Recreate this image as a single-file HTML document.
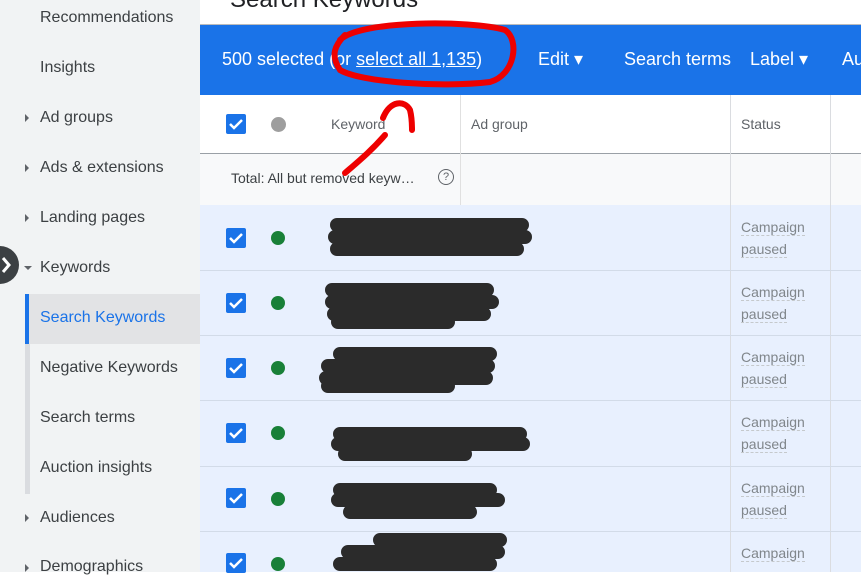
<!DOCTYPE html><html><head><style>
body{margin:0;width:861px;height:572px;overflow:hidden;font-family:"Liberation Sans",sans-serif;position:relative;background:#fff}
.sb{position:absolute;left:0;top:0;width:200px;height:572px;background:#f1f3f4}
.it{position:absolute;left:40px;font-size:16px;color:#3c4043}
.ar{position:absolute;left:25px;width:0;height:0;border-top:4px solid transparent;border-bottom:4px solid transparent;border-left:4px solid #5f6368}
.a{position:absolute}
.cb{position:absolute;left:226px;width:20px;height:20px;background:#1a73e8;border-radius:2px}
.dot{position:absolute;left:271px;width:14px;height:14px;border-radius:50%;background:#188038}
.st{position:absolute;left:741px;font-size:14px;color:#80868b;line-height:22px}
.st span{border-bottom:1px dashed #c5c9cc}
</style></head><body>
<div class="sb"></div>
<div class="it" style="top:9px">Recommendations</div>
<div class="it" style="top:59px">Insights</div>
<div class="ar" style="top:114px"></div><div class="it" style="top:109px">Ad groups</div>
<div class="ar" style="top:164px"></div><div class="it" style="top:159px">Ads &amp; extensions</div>
<div class="ar" style="top:214px"></div><div class="it" style="top:209px">Landing pages</div>
<div class="a" style="left:24px;top:266px;border-left:4px solid transparent;border-right:4px solid transparent;border-top:4px solid #5f6368"></div>
<div class="it" style="top:259px">Keywords</div>
<div class="a" style="left:25px;top:294px;width:5px;height:200px;background:#dadce0"></div>
<div class="a" style="left:25px;top:294px;width:175px;height:50px;background:#e2e3e5"></div>
<div class="a" style="left:25px;top:294px;width:4px;height:50px;background:#1a73e8"></div>
<div class="it" style="top:309px;color:#1a73e8">Search Keywords</div>
<div class="it" style="top:359px">Negative Keywords</div>
<div class="it" style="top:409px">Search terms</div>
<div class="it" style="top:459px">Auction insights</div>
<div class="ar" style="top:514px"></div><div class="it" style="top:509px">Audiences</div>
<div class="ar" style="top:564px"></div><div class="it" style="top:558px">Demographics</div>
<div class="a" style="left:-19px;top:246px;width:38px;height:38px;border-radius:50%;background:#3c4043"></div>
<div class="a" style="left:230px;top:-14px;font-size:24px;color:#202124">Search Keywords</div>
<div class="a" style="left:200px;top:24px;width:661px;height:1px;background:#bbb"></div>
<div class="a" style="left:200px;top:25px;width:661px;height:70px;background:#1a73e8;color:#fff;font-size:18px">
<div class="a" style="left:22px;top:24px;white-space:nowrap">500 selected (or <u>select all 1,135</u>)</div>
<div class="a" style="left:338px;top:24px;white-space:nowrap">Edit ▾</div>
<div class="a" style="left:424px;top:24px;white-space:nowrap">Search terms</div>
<div class="a" style="left:550px;top:24px;white-space:nowrap">Label ▾</div>
<div class="a" style="left:642px;top:24px">Au</div></div>
<div class="a" style="left:200px;top:153px;width:661px;height:52px;background:#f8f9fa"></div>
<div class="a" style="left:200px;top:153px;width:661px;height:1px;background:#9aa0a6"></div>
<div class="a" style="left:200px;top:205px;width:661px;height:367px;background:#e8f0fe"></div>
<div class="a" style="left:460px;top:95px;width:1px;height:110px;background:#e0e0e0"></div>
<div class="a" style="left:730px;top:95px;width:1px;height:477px;background:#dadce0"></div>
<div class="a" style="left:830px;top:95px;width:1px;height:477px;background:#dadce0"></div>
<div class="cb" style="top:114px"></div>
<div class="cb" style="top:228px"></div><div class="cb" style="top:293px"></div><div class="cb" style="top:358px"></div><div class="cb" style="top:423px"></div><div class="cb" style="top:488px"></div><div class="cb" style="top:553px"></div>
<div class="a" style="left:271px;top:117px;width:15px;height:15px;border-radius:50%;background:#9e9e9e"></div>
<div class="a" style="left:331px;top:116px;font-size:14px;color:#5f6368">Keyword</div>
<div class="a" style="left:471px;top:116px;font-size:14px;color:#5f6368">Ad group</div>
<div class="a" style="left:741px;top:116px;font-size:14px;color:#5f6368">Status</div>
<div class="a" style="left:231px;top:170px;font-size:14px;color:#3c4043">Total: All but removed keyw…</div>
<div class="a" style="left:438px;top:169px;width:14px;height:14px;border:1.5px solid #5f6368;border-radius:50%;font-size:11px;text-align:center;line-height:14px;color:#5f6368">?</div>
<div class="dot" style="top:231px"></div><div class="dot" style="top:296px"></div><div class="dot" style="top:361px"></div><div class="dot" style="top:426px"></div><div class="dot" style="top:492px"></div><div class="dot" style="top:557px"></div>
<svg class="a" style="left:0;top:0" width="861" height="572">
<g fill="none" stroke="#fff" stroke-width="2.5"><path d="M230 124l4 4 8-8"/><path d="M230 238l4 4 8-8"/><path d="M230 303l4 4 8-8"/><path d="M230 368l4 4 8-8"/><path d="M230 433l4 4 8-8"/><path d="M230 498l4 4 8-8"/><path d="M230 563l4 4 8-8"/></g>
<g stroke="#2b2b2b" stroke-width="14" stroke-linecap="round">
<path d="M337 225h185M335 237h190M337 249h180"/>
<path d="M332 290h155M332 302h160M334 314h150M338 322h110"/>
<path d="M340 354h150M328 366h160M326 378h160M328 386h120"/>
<path d="M340 434h180M338 444h185M345 454h120"/>
<path d="M340 490h150M338 500h160M350 512h120"/>
<path d="M380 540h120M348 552h150M340 564h150"/></g>
<g fill="none" stroke="#e00" stroke-width="6" stroke-linecap="round">
<path d="M340 40C360 20 470 20 505 30C520 40 515 75 490 82C440 88 360 82 340 70C330 55 335 45 345 35"/>
<path d="M345 173C360 160 372 150 385 135M383 118C390 100 405 100 410 110C412 118 412 125 412 130"/></g>
<path d="M3 258l6 7-6 7" fill="none" stroke="#fff" stroke-width="3"/>
</svg>
<div class="st" style="top:216px"><span>Campaign</span><br><span>paused</span></div>
<div class="st" style="top:281px"><span>Campaign</span><br><span>paused</span></div>
<div class="st" style="top:346px"><span>Campaign</span><br><span>paused</span></div>
<div class="st" style="top:411px"><span>Campaign</span><br><span>paused</span></div>
<div class="st" style="top:477px"><span>Campaign</span><br><span>paused</span></div>
<div class="st" style="top:542px"><span>Campaign</span></div>
<div class="a" style="left:200px;top:270px;width:661px;height:1px;background:#d2dbe8"></div>
<div class="a" style="left:200px;top:335px;width:661px;height:1px;background:#d2dbe8"></div>
<div class="a" style="left:200px;top:400px;width:661px;height:1px;background:#d2dbe8"></div>
<div class="a" style="left:200px;top:466px;width:661px;height:1px;background:#d2dbe8"></div>
<div class="a" style="left:200px;top:531px;width:661px;height:1px;background:#d2dbe8"></div>
</body></html>
